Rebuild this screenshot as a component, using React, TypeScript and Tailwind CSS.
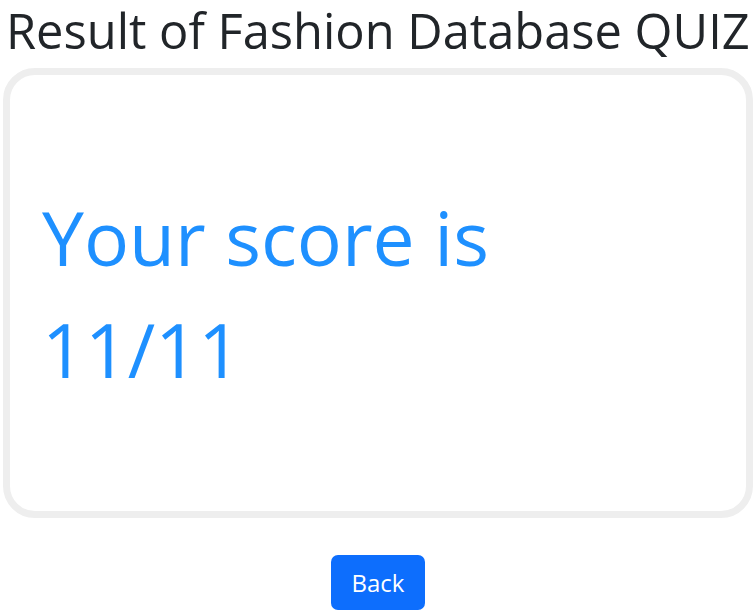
export default function App() {
  return (
    <div className="flex w-[756px] flex-col bg-white font-['Open_Sans',sans-serif]">
      <h1 className="ml-[6px] whitespace-nowrap pt-[3px] text-[48.8px] leading-[55px] text-[#212529]">
        Result of Fashion Database QUIZ
      </h1>
      <div className="mx-[3px] mt-[10px] flex h-[450px] w-[750px] items-center rounded-[32px] border-[7px] border-[#eeeeee] px-[32px]">
        <p className="text-[75px] leading-[112px] text-[#1e90ff]">
          Your score is
          <br />
          11/11
        </p>
      </div>
      <div className="mt-[37px] flex justify-center">
        <button className="h-[55px] w-[94px] rounded-[7px] bg-[#0d6efd] text-[24px] text-white">
          Back
        </button>
      </div>
    </div>
  );
}
